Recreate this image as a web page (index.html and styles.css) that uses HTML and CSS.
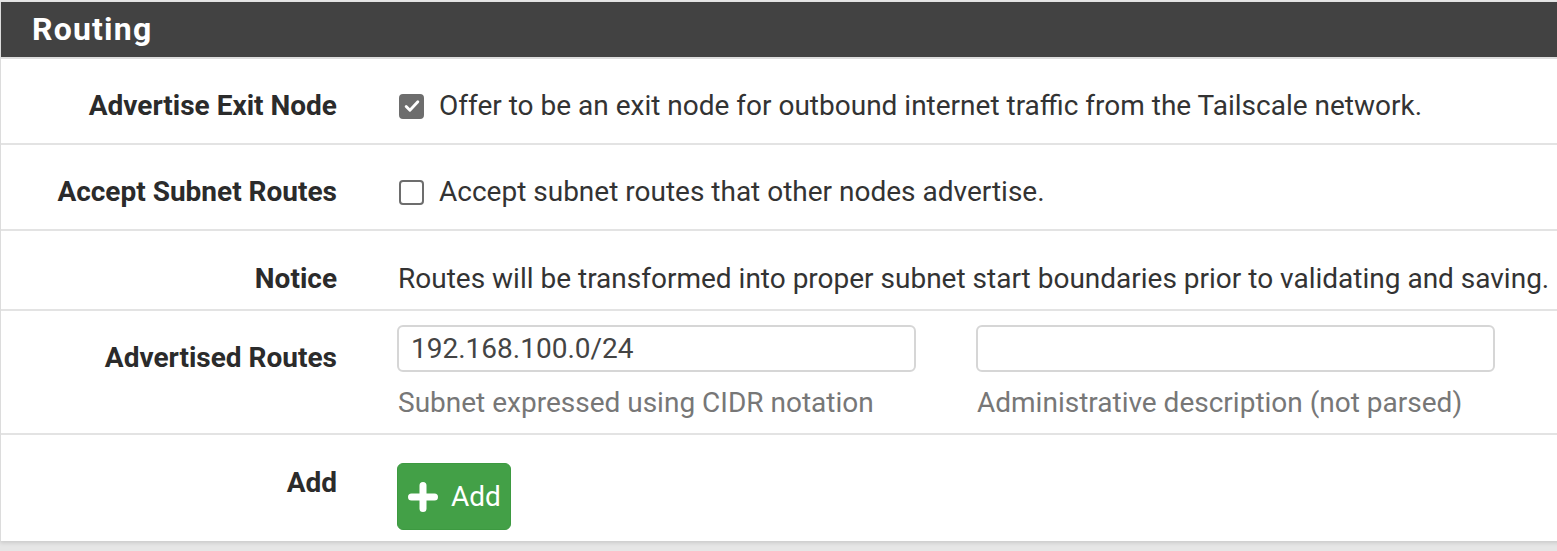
FILE: index.html
```html
<!DOCTYPE html>
<html>
<head>
<meta charset="utf-8">
<link rel="stylesheet" href="styles.css">
</head>
<body>
<div class="panel">
  <div class="panel-heading">Routing</div>
  <div class="row row-check">
    <div class="label">Advertise Exit Node</div>
    <div class="content">
      <label class="check"><span class="box checked"><svg viewBox="0 0 24 24" width="20" height="20"><path d="M5 12.5l4.5 4.5L19 7" fill="none" stroke="#fff" stroke-width="3.4" stroke-linecap="round" stroke-linejoin="round"/></svg></span>Offer to be an exit node for outbound internet traffic from the Tailscale network.</label>
    </div>
  </div>
  <div class="row row-check">
    <div class="label">Accept Subnet Routes</div>
    <div class="content">
      <label class="check"><span class="box"></span>Accept subnet routes that other nodes advertise.</label>
    </div>
  </div>
  <div class="row row-notice">
    <div class="label">Notice</div>
    <div class="content">Routes will be transformed into proper subnet start boundaries prior to validating and saving.</div>
  </div>
  <div class="row row-routes">
    <div class="label">Advertised Routes</div>
    <div class="content fields">
      <div class="field">
        <div class="input">192.168.100.0/24</div>
        <div class="help">Subnet expressed using CIDR notation</div>
      </div>
      <div class="field">
        <div class="input"></div>
        <div class="help">Administrative description (not parsed)</div>
      </div>
    </div>
  </div>
  <div class="row row-add">
    <div class="label">Add</div>
    <div class="content">
      <button class="btn-add"><svg viewBox="0 0 32 32" width="32" height="32"><path d="M16 4.5v23M4.5 16h23" stroke="#fff" stroke-width="7" stroke-linecap="round"/></svg><span>Add</span></button>
    </div>
  </div>
</div>
</body>
</html>
```

FILE: styles.css
```css
html, body {
  margin: 0;
  padding: 0;
}
body {
  background: #e6e6e6;
  font-family: Roboto, "Liberation Sans", sans-serif;
  overflow: hidden;
  width: 1557px;
  height: 551px;
}
.panel {
  margin-top: 2px;
  width: 1620px;
  background: #fff;
  border-left: 1px solid #dcdcdc;
  box-shadow: 0 2px 4px rgba(0,0,0,0.12);
}
.panel-heading {
  height: 55px;
  line-height: 55px;
  background: #424242;
  color: #fff;
  font-size: 32px;
  font-weight: 700;
  letter-spacing: 1.2px;
  padding-left: 31px;
  border-bottom: 2px solid #dedede;
}
.row {
  display: grid;
  grid-template-columns: 336px 1fr;
  column-gap: 60px;
  border-bottom: 2px solid #e3e3e3;
  font-size: 28px;
  line-height: 40px;
  color: #333;
}
.row:last-child {
  border-bottom: none;
}
.label {
  text-align: right;
  font-weight: 700;
  color: #2b2b2b;
}
.row-check {
  padding: 27px 0 17px;
}
.row-notice {
  padding: 28px 0 10px;
}
.row-routes {
  padding: 14px 0 10px;
}
.row-routes .label {
  padding-top: 13px;
}
.row-add {
  padding: 28px 0 11px;
}
.check {
  display: flex;
  align-items: center;
  gap: 15px;
  margin-left: 2px;
}
.row-notice .content {
  padding-left: 1px;
}
.box {
  width: 25px;
  height: 25px;
  border: 2px solid #6d6d6d;
  border-radius: 4px;
  box-sizing: border-box;
  display: flex;
  align-items: center;
  justify-content: center;
  background: #fff;
}
.box.checked {
  background: #6d6d6d;
}
.fields {
  display: flex;
  gap: 60px;
}
.field {
  width: 519px;
}
.input {
  height: 47px;
  box-sizing: border-box;
  border: 2px solid #d6d6d6;
  border-radius: 6px;
  padding: 0 12px;
  line-height: 43px;
  color: #444;
}
.help {
  margin-top: 11px;
  padding-left: 1px;
  color: #777;
}
.btn-add {
  display: flex;
  align-items: center;
  gap: 12px;
  height: 67px;
  width: 114px;
  box-sizing: border-box;
  padding: 0 0 0 9px;
  background: #43a047;
  border: 1px solid #3d9a41;
  border-radius: 6px;
  color: #fff;
  font-family: Roboto, "Liberation Sans", sans-serif;
  font-size: 28px;
}
```
